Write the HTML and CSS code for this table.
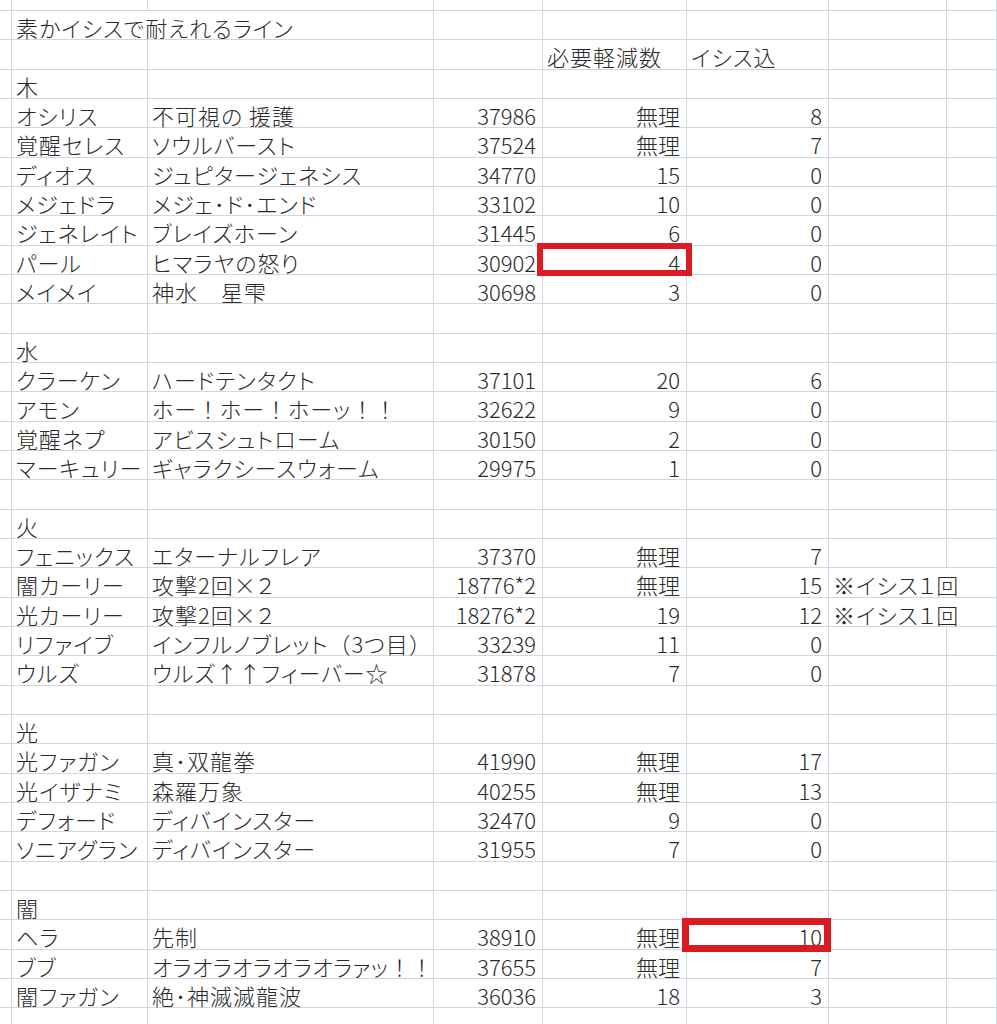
FILE: index.html
```html
<!DOCTYPE html>
<html lang="ja">
<head>
<meta charset="utf-8">
<title>素かイシスで耐えれるライン</title>
<link rel="stylesheet" href="styles.css">
</head>
<body>
<div class="sheet">
<div class="c top"></div><div class="c top"></div><div class="c top"></div><div class="c top"></div><div class="c top"></div><div class="c top"></div><div class="c top"></div><div class="c top"></div>

<div class="c"></div><div class="c span2">素かイシスで耐えれるライン</div><div class="c"></div><div class="c"></div><div class="c"></div><div class="c"></div><div class="c"></div>
<div class="c"></div><div class="c"></div><div class="c"></div><div class="c"></div><div class="c">必要軽減数</div><div class="c">イシス込</div><div class="c"></div><div class="c"></div>
<div class="c"></div><div class="c">木</div><div class="c"></div><div class="c"></div><div class="c"></div><div class="c"></div><div class="c"></div><div class="c"></div>
<div class="c"></div><div class="c">オシリス</div><div class="c">不可視の 援護</div><div class="c n">37986</div><div class="c n">無理</div><div class="c n">8</div><div class="c"></div><div class="c"></div>
<div class="c"></div><div class="c">覚醒セレス</div><div class="c">ソウルバースト</div><div class="c n">37524</div><div class="c n">無理</div><div class="c n">7</div><div class="c"></div><div class="c"></div>
<div class="c"></div><div class="c">ディオス</div><div class="c">ジュピタージェネシス</div><div class="c n">34770</div><div class="c n">15</div><div class="c n">0</div><div class="c"></div><div class="c"></div>
<div class="c"></div><div class="c">メジェドラ</div><div class="c">メジェ･ド･エンド</div><div class="c n">33102</div><div class="c n">10</div><div class="c n">0</div><div class="c"></div><div class="c"></div>
<div class="c"></div><div class="c">ジェネレイト</div><div class="c">ブレイズホーン</div><div class="c n">31445</div><div class="c n">6</div><div class="c n">0</div><div class="c"></div><div class="c"></div>
<div class="c"></div><div class="c">パール</div><div class="c">ヒマラヤの怒り</div><div class="c n">30902</div><div class="c n mark-a">4</div><div class="c n">0</div><div class="c"></div><div class="c"></div>
<div class="c"></div><div class="c">メイメイ</div><div class="c">神水　星雫</div><div class="c n">30698</div><div class="c n">3</div><div class="c n">0</div><div class="c"></div><div class="c"></div>
<div class="c"></div><div class="c"></div><div class="c"></div><div class="c"></div><div class="c"></div><div class="c"></div><div class="c"></div><div class="c"></div>
<div class="c"></div><div class="c">水</div><div class="c"></div><div class="c"></div><div class="c"></div><div class="c"></div><div class="c"></div><div class="c"></div>
<div class="c"></div><div class="c">クラーケン</div><div class="c">ハードテンタクト</div><div class="c n">37101</div><div class="c n">20</div><div class="c n">6</div><div class="c"></div><div class="c"></div>
<div class="c"></div><div class="c">アモン</div><div class="c">ホー<span class="fw">！</span>ホー<span class="fw">！</span>ホーッ<span class="fw">！！</span></div><div class="c n">32622</div><div class="c n">9</div><div class="c n">0</div><div class="c"></div><div class="c"></div>
<div class="c"></div><div class="c">覚醒ネプ</div><div class="c">アビスシュトローム</div><div class="c n">30150</div><div class="c n">2</div><div class="c n">0</div><div class="c"></div><div class="c"></div>
<div class="c"></div><div class="c">マーキュリー</div><div class="c">ギャラクシースウォーム</div><div class="c n">29975</div><div class="c n">1</div><div class="c n">0</div><div class="c"></div><div class="c"></div>
<div class="c"></div><div class="c"></div><div class="c"></div><div class="c"></div><div class="c"></div><div class="c"></div><div class="c"></div><div class="c"></div>
<div class="c"></div><div class="c">火</div><div class="c"></div><div class="c"></div><div class="c"></div><div class="c"></div><div class="c"></div><div class="c"></div>
<div class="c"></div><div class="c">フェニックス</div><div class="c">エターナルフレア</div><div class="c n">37370</div><div class="c n">無理</div><div class="c n">7</div><div class="c"></div><div class="c"></div>
<div class="c"></div><div class="c">闇カーリー</div><div class="c">攻撃2回×２</div><div class="c n">18776*2</div><div class="c n">無理</div><div class="c n">15</div><div class="c span2 note">※イシス１回</div>
<div class="c"></div><div class="c">光カーリー</div><div class="c">攻撃2回×２</div><div class="c n">18276*2</div><div class="c n">19</div><div class="c n">12</div><div class="c span2 note">※イシス１回</div>
<div class="c"></div><div class="c">リファイブ</div><div class="c">インフルノブレット<span class="fw">（</span>3つ目<span class="fw">）</span></div><div class="c n">33239</div><div class="c n">11</div><div class="c n">0</div><div class="c"></div><div class="c"></div>
<div class="c"></div><div class="c">ウルズ</div><div class="c">ウルズ↑↑フィーバー☆</div><div class="c n">31878</div><div class="c n">7</div><div class="c n">0</div><div class="c"></div><div class="c"></div>
<div class="c"></div><div class="c"></div><div class="c"></div><div class="c"></div><div class="c"></div><div class="c"></div><div class="c"></div><div class="c"></div>
<div class="c"></div><div class="c">光</div><div class="c"></div><div class="c"></div><div class="c"></div><div class="c"></div><div class="c"></div><div class="c"></div>
<div class="c"></div><div class="c">光ファガン</div><div class="c">真･双龍拳</div><div class="c n">41990</div><div class="c n">無理</div><div class="c n">17</div><div class="c"></div><div class="c"></div>
<div class="c"></div><div class="c">光イザナミ</div><div class="c">森羅万象</div><div class="c n">40255</div><div class="c n">無理</div><div class="c n">13</div><div class="c"></div><div class="c"></div>
<div class="c"></div><div class="c">デフォード</div><div class="c">ディバインスター</div><div class="c n">32470</div><div class="c n">9</div><div class="c n">0</div><div class="c"></div><div class="c"></div>
<div class="c"></div><div class="c">ソニアグラン</div><div class="c">ディバインスター</div><div class="c n">31955</div><div class="c n">7</div><div class="c n">0</div><div class="c"></div><div class="c"></div>
<div class="c"></div><div class="c"></div><div class="c"></div><div class="c"></div><div class="c"></div><div class="c"></div><div class="c"></div><div class="c"></div>
<div class="c"></div><div class="c">闇</div><div class="c"></div><div class="c"></div><div class="c"></div><div class="c"></div><div class="c"></div><div class="c"></div>
<div class="c"></div><div class="c">ヘラ</div><div class="c">先制</div><div class="c n">38910</div><div class="c n">無理</div><div class="c n mark-b">10</div><div class="c"></div><div class="c"></div>
<div class="c"></div><div class="c">ブブ</div><div class="c tight">オラオラオラオラオラァッ<span class="fw">！！</span></div><div class="c n">37655</div><div class="c n">無理</div><div class="c n">7</div><div class="c"></div><div class="c"></div>
<div class="c"></div><div class="c">闇ファガン</div><div class="c">絶･神滅滅龍波</div><div class="c n">36036</div><div class="c n">18</div><div class="c n">3</div><div class="c"></div><div class="c"></div>
<div class="c"></div><div class="c"></div><div class="c"></div><div class="c"></div><div class="c"></div><div class="c"></div><div class="c"></div><div class="c"></div>
</div>
</body>
</html>
```
FILE: styles.css
```css
html, body {
  margin: 0;
  padding: 0;
  background: #ffffff;
  overflow: hidden;
}

body {
  width: 997px;
  height: 1024px;
  font-family: "Noto Sans CJK JP", "Noto Sans", sans-serif;
  color: #2a2a2a;
}

.sheet {
  display: grid;
  grid-template-columns: 12px 136px 286px 109px 144px 142px 118px 1fr;
  grid-template-rows: 11px repeat(35, 29.333px);
  font-size: 22px;
  font-weight: 300;
  font-feature-settings: "palt";
  letter-spacing: 1px;
}

.c {
  box-sizing: border-box;
  border-right: 1px solid #d3d6e0;
  border-bottom: 1px solid #d3d6e0;
  padding: 3px 6px 0 4px;
  line-height: 27px;
  white-space: nowrap;
  min-width: 0;
}

.top {
  padding: 0;
}

.span2 {
  grid-column: span 2;
}

.n {
  text-align: right;
  letter-spacing: 0;
}

.tight {
  letter-spacing: 0.4px;
}

.fw {
  font-feature-settings: normal;
}

.note {
  padding-left: 4px;
}

.mark-a,
.mark-b {
  position: relative;
}

.mark-a::after {
  content: "";
  position: absolute;
  left: -6px;
  right: -6px;
  top: -3px;
  bottom: -2px;
  border: 6px solid #dc1a24;
}

.mark-b::after {
  content: "";
  position: absolute;
  left: -5px;
  right: -3px;
  top: -2px;
  bottom: -3px;
  border: 7px solid #dc1a24;
}
```
